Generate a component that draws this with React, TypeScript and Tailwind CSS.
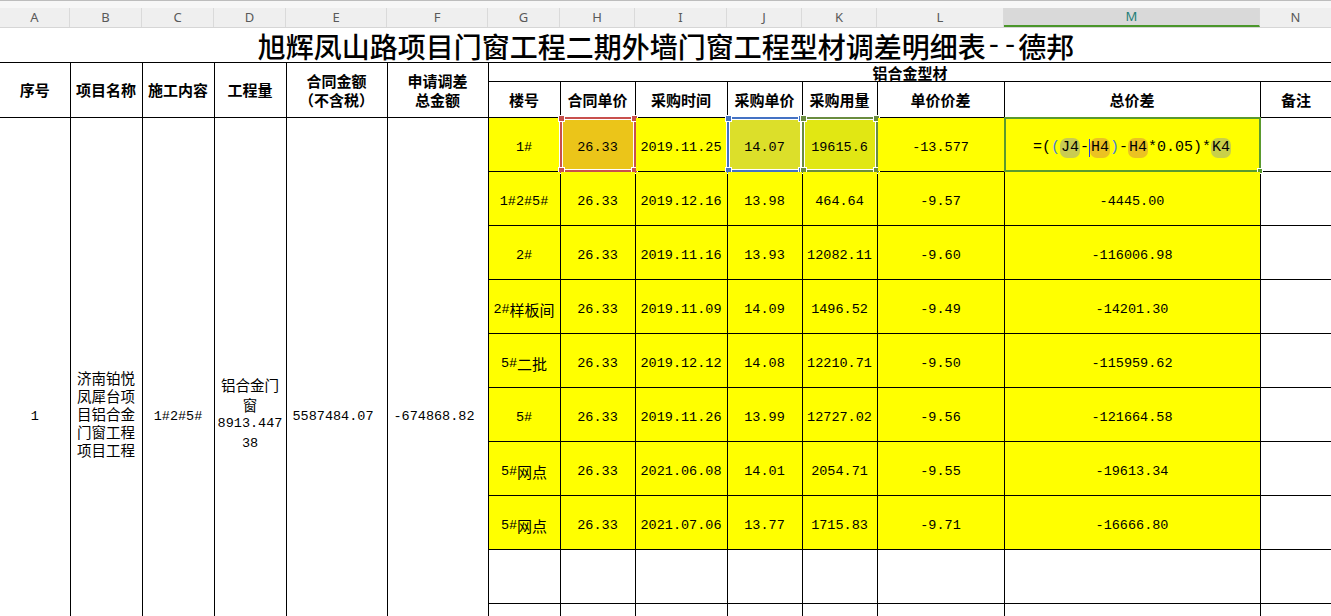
import React from "react";

const COLS = ["A", "B", "C", "D", "E", "F", "G", "H", "I", "J", "K", "L", "M", "N"];
const COL_W = [
  "w-[70px]",
  "w-[72px]",
  "w-[72px]",
  "w-[72px]",
  "w-[101px]",
  "w-[101px]",
  "w-[72px]",
  "w-[75px]",
  "w-[92px]",
  "w-[75px]",
  "w-[75px]",
  "w-[127px]",
  "w-[256px]",
  "w-[72px]",
];

const CJK = /([\u3000-\u303f\u4e00-\u9fff\uff00-\uffef]+)/;

function Mixed({ text }: { text: string }) {
  const parts = text.split(CJK).filter((p) => p.length > 0);
  return (
    <span className="inline-flex items-center justify-center">
      {parts.map((p, i) =>
        CJK.test(p) ? (
          <span key={i} className="font-['Noto_Sans_CJK_SC',sans-serif] text-[15px] leading-[20px]">
            {p}
          </span>
        ) : (
          <span key={i} className="leading-[20px]">{p}</span>
        )
      )}
    </span>
  );
}

const rows: string[][] = [
  ["1#", "26.33", "2019.11.25", "14.07", "19615.6", "-13.577", ""],
  ["1#2#5#", "26.33", "2019.12.16", "13.98", "464.64", "-9.57", "-4445.00"],
  ["2#", "26.33", "2019.11.16", "13.93", "12082.11", "-9.60", "-116006.98"],
  ["2#样板间", "26.33", "2019.11.09", "14.09", "1496.52", "-9.49", "-14201.30"],
  ["5#二批", "26.33", "2019.12.12", "14.08", "12210.71", "-9.50", "-115959.62"],
  ["5#", "26.33", "2019.11.26", "13.99", "12727.02", "-9.56", "-121664.58"],
  ["5#网点", "26.33", "2021.06.08", "14.01", "2054.71", "-9.55", "-19613.34"],
  ["5#网点", "26.33", "2021.07.06", "13.77", "1715.83", "-9.71", "-16666.80"],
];

const cell = "border border-black p-0 text-center align-middle";
const hdrFont = "font-['Noto_Sans_CJK_SC',sans-serif] font-bold text-[15px] text-black";
const hdr = `${hdrFont} leading-[19px]`;
const mono = "font-['Liberation_Mono','Noto_Sans_CJK_SC',monospace] text-[13.5px] leading-[20px] text-black";

function Corner({ pos, bg }: { pos: string; bg: string }) {
  return <div className={`absolute w-[7px] h-[7px] border border-white ${pos} ${bg}`} />;
}

function Sel({ border, bg }: { border: string; bg: string }) {
  return (
    <div
      className={`absolute -inset-[1px] border-2 ${border} shadow-[0_0_0_1px_#ffffff,inset_0_0_0_1px_#ffffff] pointer-events-none`}
    >
      <Corner pos="-top-[4px] -left-[4px]" bg={bg} />
      <Corner pos="-top-[4px] -right-[4px]" bg={bg} />
      <Corner pos="-bottom-[4px] -left-[4px]" bg={bg} />
      <Corner pos="-bottom-[4px] -right-[4px]" bg={bg} />
    </div>
  );
}

function Formula() {
  return (
    <span className="inline-flex items-center font-['Liberation_Mono',monospace] text-[15px] leading-[20px] text-black whitespace-pre">
      <span>=(</span>
      <span className="text-[#4a7fd6]">(</span>
      <span className="bg-[#c9cb52] rounded-[7px] px-px">J4</span>
      <span>-</span>
      <span className="inline-block w-px h-[18px] bg-[#2a3fe0]" />
      <span className="bg-[#ebc222] rounded-[7px] px-px">H4</span>
      <span className="text-[#4a7fd6]">)</span>
      <span>-</span>
      <span className="bg-[#ebc222] rounded-[7px] px-px">H4</span>
      <span>*0.05)*</span>
      <span className="bg-[#c9d049] rounded-[7px] px-px">K4</span>
    </span>
  );
}

export default function App() {
  return (
    <div className="w-[1331px] h-[616px] overflow-hidden bg-white">
      <div className="h-[8px] bg-[#f7f7f7] border-t border-[#bdbdbd]" />
      <div className="flex h-[20px] bg-[#efefef] border-b border-[#d6d6d6]">
        {COLS.map((c, i) => (
          <div
            key={c}
            className={`${COL_W[i]} shrink-0 flex items-center justify-center border-r border-[#dadada] font-['Noto_Sans',sans-serif] text-[13px] ${
              c === "M"
                ? "bg-[#d9d9d9] text-[#1f7e78] border-b-2 border-b-[#4a962a]"
                : "text-[#595959]"
            }`}
          >
            {c}
          </div>
        ))}
      </div>
      <table className="table-fixed border-collapse w-[1332px]">
        <colgroup>
          {COL_W.map((w, i) => (
            <col key={i} className={w} />
          ))}
        </colgroup>
        <tbody>
          <tr className="h-[34px]">
            <td colSpan={14} className="p-0 border-b border-black align-middle">
              <div className="h-[33px] pt-[2px] flex items-center justify-center font-['Noto_Sans_CJK_SC',sans-serif] font-medium text-[28px] leading-[30px] text-black whitespace-nowrap">
                <span>旭辉凤山路项目门窗工程二期外墙门窗工程型材调差明细表</span>
                <span className="font-['Liberation_Mono',monospace] font-normal text-[27px] leading-[30px]">--</span>
                <span>德邦</span>
              </div>
            </td>
          </tr>
          <tr className="h-[19px]">
            <td rowSpan={2} className={`${cell} border-l-0 ${hdr}`}>序号</td>
            <td rowSpan={2} className={`${cell} ${hdr}`}>项目名称</td>
            <td rowSpan={2} className={`${cell} ${hdr}`}>施工内容</td>
            <td rowSpan={2} className={`${cell} ${hdr}`}>工程量</td>
            <td rowSpan={2} className={`${cell} ${hdr}`}>
              合同金额
              <br />
              （不含税）
            </td>
            <td rowSpan={2} className={`${cell} ${hdr}`}>
              申请调差
              <br />
              总金额
            </td>
            <td colSpan={8} className={`${cell} align-bottom`}>
              <div className={`${hdrFont} h-[17px] leading-[17px] pt-[1px] overflow-visible`}>铝合金型材</div>
            </td>
          </tr>
          <tr className="h-[36px]">
            {["楼号", "合同单价", "采购时间", "采购单价", "采购用量", "单价价差", "总价差", "备注"].map((t) => (
              <td key={t} className={`${cell}`}>
                <div className={`${hdr} h-[34px] flex items-center justify-center`}>{t}</div>
              </td>
            ))}
          </tr>
          {rows.map((r, ri) => (
            <tr key={ri} className="h-[54px]">
              {ri === 0 && (
                <>
                  <td rowSpan={11} className={`${cell} border-l-0 ${mono} pt-[6px]`}>1</td>
                  <td
                    rowSpan={11}
                    className={`${cell} font-['Noto_Sans_CJK_SC',sans-serif] text-[14.5px] leading-[18px] text-black`}
                  >
                    济南铂悦
                    <br />
                    凤犀台项
                    <br />
                    目铝合金
                    <br />
                    门窗工程
                    <br />
                    项目工程
                  </td>
                  <td rowSpan={11} className={`${cell} ${mono} pt-[6px]`}>1#2#5#</td>
                  <td rowSpan={11} className={`${cell} ${mono}`}>
                    <div className="flex flex-col items-center leading-[19.5px]">
                      <span className="font-['Noto_Sans_CJK_SC',sans-serif] text-[14.5px] leading-[19.5px]">铝合金门</span>
                      <span className="font-['Noto_Sans_CJK_SC',sans-serif] text-[14.5px] leading-[19.5px]">窗</span>
                      <span className="leading-[19.5px]">8913.447</span>
                      <span className="leading-[19.5px]">38</span>
                    </div>
                  </td>
                  <td rowSpan={11} className={`${cell} ${mono} text-left pl-[6px] pt-[6px]`}>5587484.07</td>
                  <td rowSpan={11} className={`${cell} ${mono} text-left pl-[6px] pt-[6px]`}>-674868.82</td>
                </>
              )}
              {r.slice(0, 6).map((v, ci) => {
                let bg = "bg-[#ffff00]";
                let sel: React.ReactNode = null;
                if (ri === 0 && ci === 1) {
                  bg = "bg-[#ebc519]";
                  sel = <Sel border="border-[#c8504d]" bg="bg-[#c8504d]" />;
                }
                if (ri === 0 && ci === 3) {
                  bg = "bg-[#dcdf2a]";
                  sel = <Sel border="border-[#4472c4]" bg="bg-[#4472c4]" />;
                }
                if (ri === 0 && ci === 4) {
                  bg = "bg-[#e1e713]";
                  sel = <Sel border="border-[#6a8c3f]" bg="bg-[#6a8c3f]" />;
                }
                return (
                  <td key={ci} className={`${cell} ${mono} ${bg} relative pt-[7px]`}>
                    <Mixed text={v} />
                    {sel}
                  </td>
                );
              })}
              <td className={`${cell} ${mono} bg-[#ffff00] relative pt-[7px]`}>
                {ri === 0 ? (
                  <>
                    <Formula />
                    <div className="absolute -inset-[1px] border-2 border-[#5a9a2e] pointer-events-none">
                      <div className="absolute -bottom-[4px] -right-[4px] w-[6px] h-[6px] bg-[#5a9a2e] border border-white" />
                    </div>
                  </>
                ) : (
                  r[6]
                )}
              </td>
              <td className={`${cell} bg-white`} />
            </tr>
          ))}
          {[0, 1, 2].map((k) => (
            <tr key={`b${k}`} className="h-[54px]">
              {Array.from({ length: 8 }).map((_, j) => (
                <td key={j} className={`${cell} bg-white`} />
              ))}
            </tr>
          ))}
        </tbody>
      </table>
    </div>
  );
}
